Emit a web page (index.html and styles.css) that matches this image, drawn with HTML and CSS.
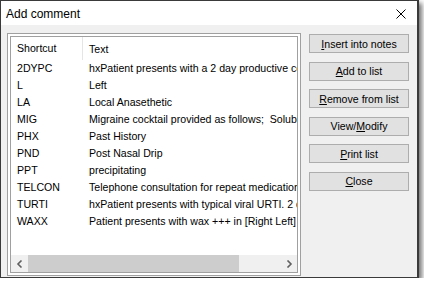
FILE: index.html
```html
<!DOCTYPE html>
<html lang="en">

<head>
    <meta charset="utf-8">
    <title>Add comment</title>
    <link rel="stylesheet" href="styles.css">
</head>

<body>
    <div class="window">
        <header class="titlebar">
            <span class="title">Add comment</span>
            <button class="close-btn" aria-label="Close">
                <svg width="10" height="10" viewBox="0 0 10 10">
                    <path d="M0.5 0.5 L9.5 9.5 M9.5 0.5 L0.5 9.5" stroke="#000" stroke-width="1" fill="none"/>
                </svg>
            </button>
        </header>

        <main class="content">
            <section class="list-frame">
                <div class="list">
                    <div class="list-head">
                        <div class="col-short">Shortcut</div>
                        <div class="col-text">Text</div>
                    </div>
                    <div class="list-rows">
                        <div class="row"><div class="col-short">2DYPC</div><div class="col-text">hxPatient presents with a 2 day productive cough</div></div>
                        <div class="row"><div class="col-short">L</div><div class="col-text">Left</div></div>
                        <div class="row"><div class="col-short">LA</div><div class="col-text">Local Anasethetic</div></div>
                        <div class="row"><div class="col-short">MIG</div><div class="col-text">Migraine cocktail provided as follows;&nbsp; Soluble aspirin</div></div>
                        <div class="row"><div class="col-short">PHX</div><div class="col-text">Past History</div></div>
                        <div class="row"><div class="col-short">PND</div><div class="col-text">Post Nasal Drip</div></div>
                        <div class="row"><div class="col-short">PPT</div><div class="col-text">precipitating</div></div>
                        <div class="row"><div class="col-short">TELCON</div><div class="col-text">Telephone consultation for repeat medication</div></div>
                        <div class="row"><div class="col-short">TURTI</div><div class="col-text">hxPatient presents with typical viral URTI. 2 days</div></div>
                        <div class="row"><div class="col-short">WAXX</div><div class="col-text">Patient presents with wax +++ in [Right Left] ear</div></div>
                    </div>
                    <div class="hscroll">
                        <div class="arrow">
                            <svg width="8" height="8" viewBox="0 0 8 8"><path d="M5.5 0.5 L2 4 L5.5 7.5" stroke="#606060" stroke-width="1.6" fill="none"/></svg>
                        </div>
                        <div class="track"><div class="thumb"></div></div>
                        <div class="arrow">
                            <svg width="8" height="8" viewBox="0 0 8 8"><path d="M2.5 0.5 L6 4 L2.5 7.5" stroke="#606060" stroke-width="1.6" fill="none"/></svg>
                        </div>
                    </div>
                </div>
            </section>

            <nav class="actions">
                <button class="btn"><u>I</u>nsert into notes</button>
                <button class="btn"><u>A</u>dd to list</button>
                <button class="btn"><u>R</u>emove from list</button>
                <button class="btn">View/<u>M</u>odify</button>
                <button class="btn"><u>P</u>rint list</button>
                <button class="btn"><u>C</u>lose</button>
            </nav>
        </main>
    </div>
</body>

</html>
```

FILE: styles.css
```css
body {
    margin: 0;
    background-color: white;
    font-family: "Liberation Sans", Arial, sans-serif;
}

.window {
    width: 416px;
    height: 276px;
    border: 1px solid #3a3a3a;
    border-right-width: 2px;
    background-color: #f0f0f0;
    box-shadow: 3px 3px 5px rgba(0, 0, 0, .55);
    display: flex;
    flex-direction: column;
}

.titlebar {
    height: 24px;
    background-color: white;
    display: flex;
    align-items: center;
    justify-content: space-between;
}

.title {
    font-size: 12px;
    padding-left: 5px;
    padding-top: 1px;
}

.close-btn {
    border: none;
    background: none;
    padding: 0;
    width: 10px;
    height: 10px;
    margin-right: 11px;
    margin-top: 1px;
    display: flex;
}

.content {
    flex: 1;
    display: flex;
    padding: 8px 7px 1px 6px;
    gap: 8px;
}

.list-frame {
    width: 288px;
    border: 1px solid #a0a0a0;
    padding: 2px;
    background-color: white;
    display: flex;
}

.list {
    flex: 1;
    border: 1px solid #a0a0a0;
    display: flex;
    flex-direction: column;
    font-size: 10.6px;
    overflow: hidden;
}

.list-head {
    display: flex;
    height: 23px;
    align-items: center;
}

.list-head .col-short {
    border-right: 1px solid #e5e5e5;
    height: 23px;
    line-height: 23px;
}

.col-short {
    width: 65px;
    padding-left: 6px;
    flex-shrink: 0;
}

.col-text {
    padding-left: 6px;
    white-space: nowrap;
}

.list-rows {
    flex: 1;
    overflow: hidden;
}

.row {
    display: flex;
    height: 17px;
    line-height: 17px;
}

.row .col-text {
    padding-left: 7px;
}

.hscroll {
    height: 17px;
    display: flex;
    background-color: #f0f0f0;
}

.arrow {
    width: 17px;
    display: flex;
    align-items: center;
    justify-content: center;
}

.track {
    flex: 1;
}

.thumb {
    width: 211px;
    height: 100%;
    background-color: #cdcdcd;
}

.actions {
    display: flex;
    flex-direction: column;
    gap: 8.6px;
    padding-top: 1px;
}

.btn {
    width: 100px;
    height: 19px;
    background-color: #e1e1e1;
    border: 1px solid #adadad;
    font-family: "Liberation Sans", Arial, sans-serif;
    font-size: 10.6px;
    color: black;
    padding: 0;
}
```
